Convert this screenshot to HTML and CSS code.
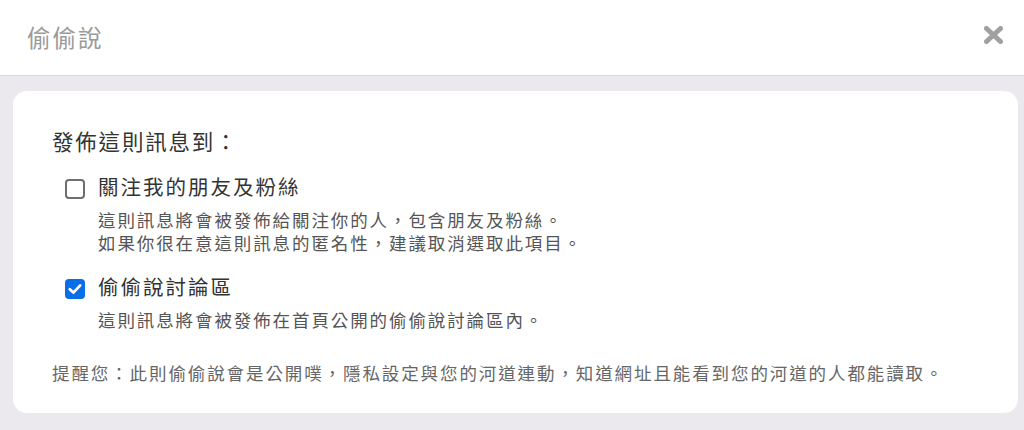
FILE: index.html
```html
<!DOCTYPE html>
<html lang="zh-Hant">
<head>
<meta charset="utf-8">
<title>偷偷說</title>
<link rel="stylesheet" href="styles.css">
</head>
<body>
<div class="dialog">
  <header class="head">
    <h1 class="title">偷偷說</h1>
    <button class="close" aria-label="關閉">
      <svg width="21" height="18" viewBox="0 0 21 18"><path d="M3.5 2.5 L17.5 15.5 M17.5 2.5 L3.5 15.5" stroke="#a0a0a0" stroke-width="5" stroke-linecap="round" fill="none"/></svg>
    </button>
  </header>
  <main class="body">
    <section class="card">
      <p class="heading">發佈這則訊息到：</p>
      <div class="option">
        <span class="cb"></span>
        <div class="opt-text">
          <p class="label">關注我的朋友及粉絲</p>
          <p class="desc">這則訊息將會被發佈給關注你的人，包含朋友及粉絲。<br>如果你很在意這則訊息的匿名性，建議取消選取此項目。</p>
        </div>
      </div>
      <div class="option option2">
        <span class="cb checked"><svg width="20" height="20" viewBox="0 0 20 20"><path d="M4.8 10.2 L8.4 13.6 L15.2 6.4" stroke="#fff" stroke-width="2.8" stroke-linecap="round" stroke-linejoin="round" fill="none"/></svg></span>
        <div class="opt-text">
          <p class="label">偷偷說討論區</p>
          <p class="desc">這則訊息將會被發佈在首頁公開的偷偷說討論區內。</p>
        </div>
      </div>
      <p class="reminder">提醒您：此則偷偷說會是公開噗，隱私設定與您的河道連動，知道網址且能看到您的河道的人都能讀取。</p>
    </section>
  </main>
</div>
</body>
</html>
```

FILE: styles.css
```css
* { box-sizing: border-box; }
html, body {
  margin: 0;
  padding: 0;
  height: 100%;
}
body {
  font-family: "Noto Sans CJK TC", "Noto Sans", sans-serif;
  background: #ebe9ee;
}
p { margin: 0; }
.dialog {
  width: 1024px;
  height: 430px;
  display: flex;
  flex-direction: column;
}
.head {
  height: 76px;
  flex: none;
  background: #fff;
  border-bottom: 1px solid #dcdae0;
  display: flex;
  align-items: center;
  justify-content: space-between;
  padding: 0 20px 2px 27px;
}
.title {
  margin: 0;
  font-size: 23.5px;
  font-weight: 400;
  letter-spacing: 2px;
  color: #9a9a9a;
}
.close {
  border: 0;
  background: none;
  padding: 0;
  display: flex;
  margin-top: -4px;
}
.body {
  flex: 1;
  padding: 15px 6px 17px 13px;
}
.card {
  background: #fff;
  border-radius: 14px;
  height: 100%;
  padding: 35px 30px 0 39px;
}
.heading {
  font-size: 21.5px;
  line-height: 30px;
  letter-spacing: 1.8px;
  color: #333;
}
.option {
  display: grid;
  grid-template-columns: 20px 1fr;
  column-gap: 13px;
  margin: 16px 0 0 13px;
}
.option2 { margin-top: 18px; }
.cb {
  width: 20px;
  height: 20px;
  margin-top: 7px;
  border: 2px solid #6f6f6f;
  border-radius: 4px;
  display: flex;
  align-items: center;
  justify-content: center;
}
.cb.checked {
  background: #0a6ee6;
  border-color: #0a6ee6;
}
.cb.checked svg { flex: none; }
.label {
  font-size: 20.5px;
  line-height: 28px;
  letter-spacing: 2px;
  color: #333;
}
.desc {
  margin-top: 8px;
  font-size: 17.5px;
  line-height: 23px;
  letter-spacing: 1.9px;
  color: #555;
}
.reminder {
  margin-top: 30px;
  font-size: 17.5px;
  line-height: 23px;
  letter-spacing: 1.9px;
  color: #666;
}
```
